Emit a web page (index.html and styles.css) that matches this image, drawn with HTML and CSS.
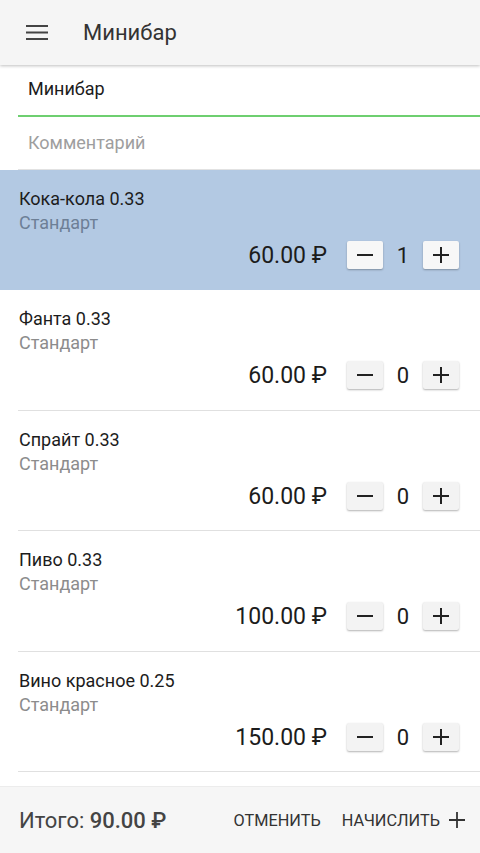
FILE: index.html
```html
<!DOCTYPE html>
<html lang="ru">
<head>
<meta charset="utf-8">
<title>Минибар</title>
<link rel="stylesheet" href="styles.css">
</head>
<body>
<div class="app">
  <header class="appbar">
    <svg class="menu-icon" width="22" height="18" viewBox="0 0 22 18"><path d="M0 3h22M0 9.5h22M0 16h22" stroke="#444" stroke-width="2.2" fill="none"/></svg>
    <h1 class="title">Минибар</h1>
  </header>
  <div class="form">
    <div class="field field-active">Минибар</div>
    <div class="field field-placeholder">Комментарий</div>
  </div>
  <ul class="list">
    <li class="item item-selected">
      <div class="name">Кока-кола 0.33</div>
      <div class="sub">Стандарт</div>
      <div class="controls">
        <span class="price">60.00 ₽</span>
        <button class="btn"><svg width="18" height="18" viewBox="0 0 18 18"><path d="M1 9h16" stroke="#222" stroke-width="2"/></svg></button>
        <span class="count">1</span>
        <button class="btn"><svg width="18" height="18" viewBox="0 0 18 18"><path d="M1 9h16M9 1v16" stroke="#222" stroke-width="2"/></svg></button>
      </div>
    </li>
    <li class="item">
      <div class="name">Фанта 0.33</div>
      <div class="sub">Стандарт</div>
      <div class="controls">
        <span class="price">60.00 ₽</span>
        <button class="btn"><svg width="18" height="18" viewBox="0 0 18 18"><path d="M1 9h16" stroke="#222" stroke-width="2"/></svg></button>
        <span class="count">0</span>
        <button class="btn"><svg width="18" height="18" viewBox="0 0 18 18"><path d="M1 9h16M9 1v16" stroke="#222" stroke-width="2"/></svg></button>
      </div>
    </li>
    <li class="item">
      <div class="name">Спрайт 0.33</div>
      <div class="sub">Стандарт</div>
      <div class="controls">
        <span class="price">60.00 ₽</span>
        <button class="btn"><svg width="18" height="18" viewBox="0 0 18 18"><path d="M1 9h16" stroke="#222" stroke-width="2"/></svg></button>
        <span class="count">0</span>
        <button class="btn"><svg width="18" height="18" viewBox="0 0 18 18"><path d="M1 9h16M9 1v16" stroke="#222" stroke-width="2"/></svg></button>
      </div>
    </li>
    <li class="item">
      <div class="name">Пиво 0.33</div>
      <div class="sub">Стандарт</div>
      <div class="controls">
        <span class="price">100.00 ₽</span>
        <button class="btn"><svg width="18" height="18" viewBox="0 0 18 18"><path d="M1 9h16" stroke="#222" stroke-width="2"/></svg></button>
        <span class="count">0</span>
        <button class="btn"><svg width="18" height="18" viewBox="0 0 18 18"><path d="M1 9h16M9 1v16" stroke="#222" stroke-width="2"/></svg></button>
      </div>
    </li>
    <li class="item">
      <div class="name">Вино красное 0.25</div>
      <div class="sub">Стандарт</div>
      <div class="controls">
        <span class="price">150.00 ₽</span>
        <button class="btn"><svg width="18" height="18" viewBox="0 0 18 18"><path d="M1 9h16" stroke="#222" stroke-width="2"/></svg></button>
        <span class="count">0</span>
        <button class="btn"><svg width="18" height="18" viewBox="0 0 18 18"><path d="M1 9h16M9 1v16" stroke="#222" stroke-width="2"/></svg></button>
      </div>
    </li>
  </ul>
  <footer class="footer">
    <div class="total">Итого: <b>90.00 ₽</b></div>
    <div class="actions">
      <span class="action">ОТМЕНИТЬ</span>
      <span class="action action-add">НАЧИСЛИТЬ <svg width="16" height="16" viewBox="0 0 16 16"><path d="M0 8h16M8 0v16" stroke="#333" stroke-width="1.8"/></svg></span>
    </div>
  </footer>
</div>
</body>
</html>
```

FILE: styles.css
```css
* { box-sizing: border-box; }
html, body { margin: 0; padding: 0; }
body {
  font-family: Roboto, "Noto Sans", "Liberation Sans", sans-serif;
  background: #fff;
  color: #1c1c1c;
  width: 480px;
  height: 853px;
  overflow: hidden;
}
.app {
  display: flex;
  flex-direction: column;
  height: 853px;
}
.appbar {
  height: 65px;
  flex: none;
  background: #f5f5f5;
  display: flex;
  align-items: center;
  padding-left: 26px;
  box-shadow: 0 1px 3px rgba(0,0,0,0.25);
  position: relative;
  z-index: 1;
}
.menu-icon { flex: none; margin-top: -1px; }
.title {
  margin: 0 0 0 35px;
  font-size: 22px;
  font-weight: 400;
  color: #333;
}
.form {
  padding-left: 18px;
}
.field {
  height: 52px;
  padding: 12px 0 0 10px;
  font-size: 18px;
  line-height: 24px;
  border-bottom: 1px solid #e2e2e2;
}
.field-active {
  border-bottom: 2px solid #6ecf70;
  height: 52px;
}
.field-placeholder {
  color: #9e9e9e;
  height: 53px;
  padding-top: 14px;
}
.list {
  list-style: none;
  margin: 0;
  padding: 0;
  flex: 1;
}
.item {
  height: 120.4px;
  padding: 17px 21px 0 19px;
  position: relative;
  display: flex;
  flex-direction: column;
}
.item::after {
  content: "";
  position: absolute;
  left: 18px;
  right: 0;
  bottom: 0;
  height: 1px;
  background: #e0e0e0;
}
.item-selected { background: #b3c9e3; }
.item-selected::after { background: #b3c9e3; }
.name {
  font-size: 18px;
  line-height: 24px;
  color: #1c1c1c;
}
.sub {
  font-size: 18px;
  line-height: 24px;
  color: #8c8c8c;
}
.item-selected .sub { color: #6d7f96; }
.controls {
  display: flex;
  align-items: center;
  justify-content: flex-end;
  margin-top: 6px;
  height: 28px;
}
.price {
  font-size: 23px;
  margin-right: 20px;
  margin-top: 1px;
}
.btn {
  width: 36px;
  height: 28px;
  border: none;
  border-radius: 2px;
  background: #f3f3f3;
  box-shadow: 0 1px 2px rgba(0,0,0,0.3);
  display: flex;
  align-items: center;
  justify-content: center;
  padding: 0;
}
.item-selected .btn { background: #f7f7f7; }
.count {
  width: 40px;
  text-align: center;
  font-size: 22px;
  margin-top: 1px;
}
.footer {
  height: 67px;
  flex: none;
  background: #f6f6f6;
  border-top: 1px solid #ececec;
  display: flex;
  align-items: center;
  justify-content: space-between;
  padding: 0 15px 0 19px;
}
.total {
  font-size: 22px;
  color: #444;
}
.total b { font-weight: 500; }
.actions {
  display: flex;
  align-items: center;
  gap: 21px;
}
.action {
  font-size: 16.3px;
  color: #333;
  display: flex;
  align-items: center;
  gap: 9px;
}
```
